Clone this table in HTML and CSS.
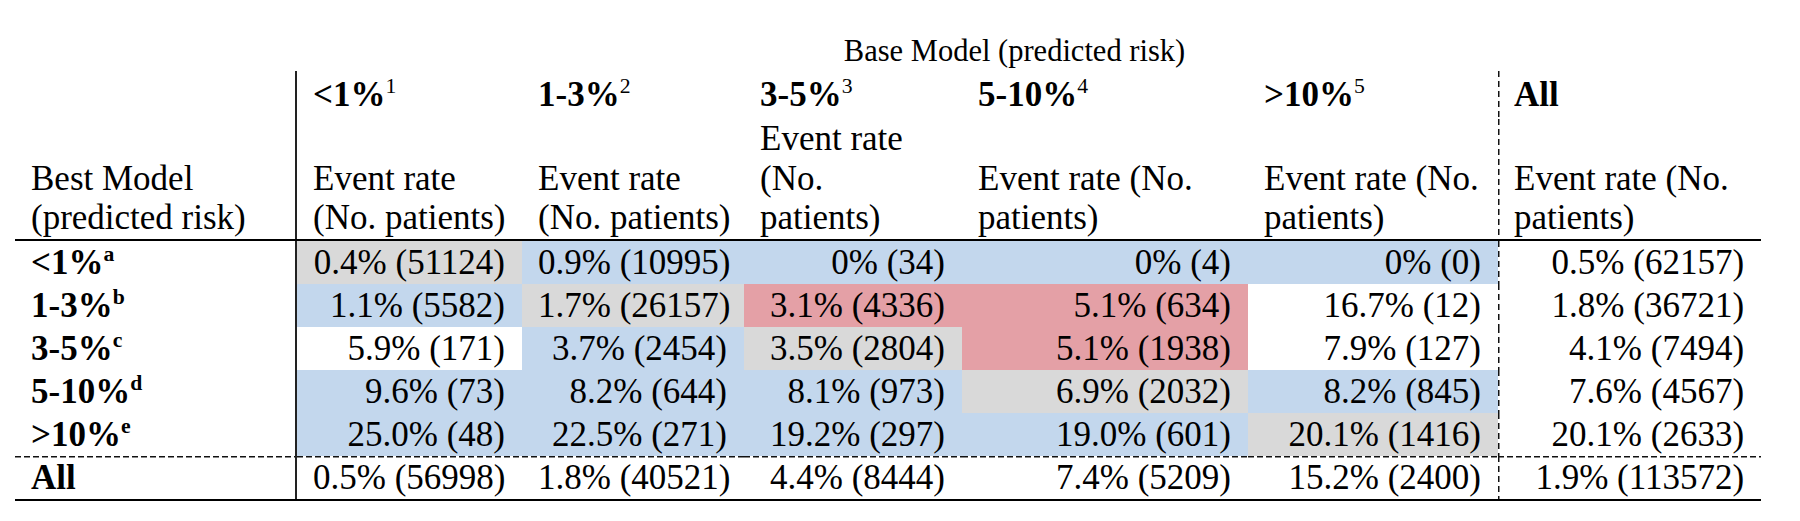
FILE: index.html
```html
<!DOCTYPE html>
<html lang="en">
<head>
<meta charset="utf-8">
<title>Reclassification table</title>
<link rel="stylesheet" href="styles.css">
</head>
<body>
<main class="page">
<table class="grid">
  <colgroup>
    <col class="w0"><col class="w1"><col class="w2"><col class="w3"><col class="w4"><col class="w5"><col class="w6">
  </colgroup>
  <thead>
    <tr class="r-title">
      <th></th>
      <th colspan="6" class="title">Base Model (predicted risk)</th>
    </tr>
    <tr class="r-range">
      <th class="lab"></th>
      <th class="rng solid">&lt;1%<sup>1</sup></th>
      <th class="rng">1-3%<sup>2</sup></th>
      <th class="rng">3-5%<sup>3</sup></th>
      <th class="rng">5-10%<sup>4</sup></th>
      <th class="rng">&gt;10%<sup>5</sup></th>
      <th class="rng dash">All</th>
    </tr>
    <tr class="r-sub">
      <th class="lab">Best Model<br>(predicted risk)</th>
      <th class="sub solid">Event rate<br>(No. patients)</th>
      <th class="sub">Event rate<br>(No. patients)</th>
      <th class="sub">Event rate<br>(No.<br>patients)</th>
      <th class="sub">Event rate (No.<br>patients)</th>
      <th class="sub">Event rate (No.<br>patients)</th>
      <th class="sub dash">Event rate (No.<br>patients)</th>
    </tr>
  </thead>
  <tbody>
    <tr>
      <th class="row">&lt;1%<sup>a</sup></th>
      <td class="solid gray">0.4% (51124)</td>
      <td class="blue">0.9% (10995)</td>
      <td class="blue">0% (34)</td>
      <td class="blue">0% (4)</td>
      <td class="blue">0% (0)</td>
      <td class="dash">0.5% (62157)</td>
    </tr>
    <tr>
      <th class="row">1-3%<sup>b</sup></th>
      <td class="solid blue">1.1% (5582)</td>
      <td class="gray">1.7% (26157)</td>
      <td class="red">3.1% (4336)</td>
      <td class="red">5.1% (634)</td>
      <td>16.7% (12)</td>
      <td class="dash">1.8% (36721)</td>
    </tr>
    <tr>
      <th class="row">3-5%<sup>c</sup></th>
      <td class="solid">5.9% (171)</td>
      <td class="blue">3.7% (2454)</td>
      <td class="gray">3.5% (2804)</td>
      <td class="red">5.1% (1938)</td>
      <td>7.9% (127)</td>
      <td class="dash">4.1% (7494)</td>
    </tr>
    <tr>
      <th class="row">5-10%<sup>d</sup></th>
      <td class="solid blue">9.6% (73)</td>
      <td class="blue">8.2% (644)</td>
      <td class="blue">8.1% (973)</td>
      <td class="gray">6.9% (2032)</td>
      <td class="blue">8.2% (845)</td>
      <td class="dash">7.6% (4567)</td>
    </tr>
    <tr>
      <th class="row">&gt;10%<sup>e</sup></th>
      <td class="solid blue">25.0% (48)</td>
      <td class="blue">22.5% (271)</td>
      <td class="blue">19.2% (297)</td>
      <td class="blue">19.0% (601)</td>
      <td class="gray">20.1% (1416)</td>
      <td class="dash">20.1% (2633)</td>
    </tr>
  </tbody>
  <tfoot>
    <tr class="r-all">
      <th class="row">All</th>
      <td class="solid">0.5% (56998)</td>
      <td>1.8% (40521)</td>
      <td>4.4% (8444)</td>
      <td>7.4% (5209)</td>
      <td>15.2% (2400)</td>
      <td class="dash">1.9% (113572)</td>
    </tr>
  </tfoot>
</table>
</main>
</body>
</html>
```

FILE: styles.css
```css
html, body {
  margin: 0;
  padding: 0;
  background: #ffffff;
}

.page {
  padding: 30px 0 0 15px;
}

.grid {
  border-collapse: collapse;
  table-layout: fixed;
  width: 1746px;
  font-family: "Liberation Serif", "Times New Roman", serif;
  font-size: 35px;
  line-height: 39px;
  color: #000;
}

.w0 { width: 281px; }
.w1 { width: 226px; }
.w2 { width: 222px; }
.w3 { width: 218px; }
.w4 { width: 286px; }
.w5 { width: 250px; }
.w6 { width: 263px; }

.grid th,
.grid td {
  padding: 2px 17px 2px 16px;
  text-align: left;
  font-weight: normal;
  vertical-align: middle;
  white-space: nowrap;
}

.grid td {
  text-align: right;
}

.grid sup {
  font-size: 0.62em;
  line-height: 0;
  vertical-align: 0.62em;
  font-weight: normal;
}

.r-title th {
  padding: 0;
  height: 39px;
  vertical-align: top;
}

.grid .title {
  font-size: 30.5px;
  line-height: 39px;
  text-align: center;
  padding-right: 28px;
  padding-top: 2px;
}

.r-range th {
  height: 40px;
  padding-top: 4px;
  padding-bottom: 4px;
  vertical-align: top;
}

.grid .rng {
  font-weight: bold;
}

.r-sub th {
  padding-top: 0;
  padding-bottom: 1px;
  line-height: 39.5px;
  vertical-align: bottom;
  border-bottom: 2px solid #000;
}

.grid .row {
  font-weight: bold;
}

.grid .row sup {
  font-weight: bold;
}

tbody td,
tbody th {
  height: 39px;
}

.solid {
  border-left: 2px solid #222;
}

.dash {
  background-image: repeating-linear-gradient(to bottom, #111 0 6px, transparent 6px 10px);
  background-size: 1.5px 100%;
  background-repeat: no-repeat;
  background-position: left top;
}

.blue { background-color: #c3d7ed; }
.gray { background-color: #d9d9d9; }
.red  { background-color: #e4a0a6; }

.r-all th,
.r-all td {
  height: 39px;
  border-bottom: 2.5px solid #000;
  background-image: repeating-linear-gradient(to right, #111 0 6px, transparent 6px 9px);
  background-size: 100% 1.5px;
  background-repeat: no-repeat;
  background-position: left top;
}

.r-all td.dash {
  background-image:
    repeating-linear-gradient(to right, #111 0 6px, transparent 6px 9px),
    repeating-linear-gradient(to bottom, #111 0 6px, transparent 6px 10px);
  background-size: 100% 1.5px, 1.5px 100%;
  background-repeat: no-repeat, no-repeat;
  background-position: left top, left top;
}
```
